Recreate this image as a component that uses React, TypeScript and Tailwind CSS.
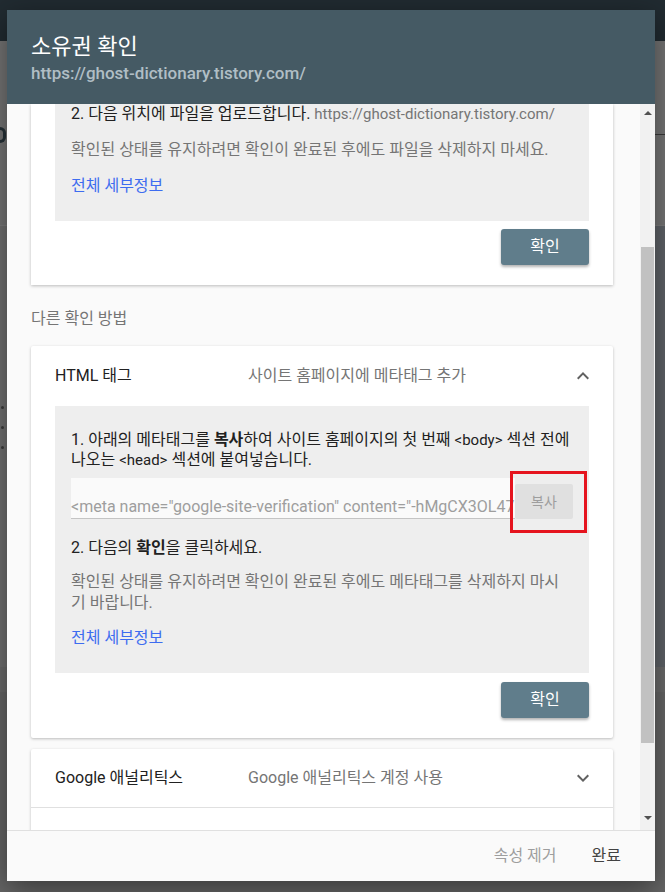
const FONT = "font-['Roboto','Noto_Sans_CJK_KR',sans-serif]";

function ExpandIcon({ up }: { up?: boolean }) {
  return (
    <svg width="24" height="24" viewBox="0 0 24 24" className="text-[#616161]">
      <path
        fill="currentColor"
        d={up ? "M7.41 15.41L12 10.83l4.59 4.58L18 14l-6-6-6 6z" : "M7.41 8.59L12 13.17l4.59-4.58L18 10l-6 6-6-6z"}
      />
    </svg>
  );
}

function ConfirmButton() {
  return (
    <div className="flex justify-end">
      <button className="h-[36px] w-[88px] rounded-[3px] bg-[#607d8b] text-[16px] text-white shadow-[0_2px_3px_rgba(0,0,0,0.3)]">
        확인
      </button>
    </div>
  );
}

// page behind the dimmed overlay
function Backdrop() {
  return (
    <div className="flex h-[892px] w-[665px] flex-col bg-[#727272]">
      <div className="h-[41px] bg-[#212b31]" />
      <div className="flex h-[185px] justify-between border-b border-[#7d7d7d] bg-[#757575]">
        <div className="mt-[86px] h-[16px] w-[6px] rounded-r-full border-[3px] border-l-0 border-[#263238]" />
        <div className="mt-[93px] h-[1px] w-[10px] bg-[#3a3a3a]" />
      </div>
      <div className="flex h-[441px] justify-between bg-[#707070]">
        <div className="flex flex-col gap-[17px] pl-[1px] pt-[180px]">
          <div className="h-[3px] w-[3px] rounded-full bg-[#3c3c3c]" />
          <div className="h-[3px] w-[3px] rounded-full bg-[#3c3c3c]" />
          <div className="h-[3px] w-[3px] rounded-full bg-[#3c3c3c]" />
        </div>
        <div className="w-[10px] bg-[#5f6368]" />
      </div>
      <div className="h-[25px] bg-[#6b6b6b]" />
      <div className="flex-1 bg-[#666666]" />
    </div>
  );
}

export default function App() {
  return (
    <div className={`relative h-[892px] w-[665px] overflow-hidden ${FONT}`}>
      <Backdrop />

      <div className="absolute left-[7px] top-[10px] flex h-[871px] w-[648px] flex-col bg-[#fafafa] shadow-[0_8px_28px_rgba(0,0,0,0.45)]">
        <header className="h-[94px] shrink-0 bg-[#455a64] px-[24px] pt-[24px]">
          <h1 className="text-[22px] leading-[26px] text-white">소유권 확인</h1>
          <p className="mt-[2px] text-[17px] font-medium leading-[22px] text-[#b0bec5]">
            https://ghost-dictionary.tistory.com/
          </p>
        </header>

        <div className="flex min-h-0 flex-1">
          <div className="min-w-0 flex-1 overflow-hidden pl-[24px] pr-[27px]">
            {/* file upload card, scrolled partly out of view */}
            <div className="bg-white px-[24px] pb-[20px] shadow-[0_1px_3px_rgba(0,0,0,0.25)]">
              <div className="bg-[#eeeeee] px-[16px] pb-[25px] text-[16px] leading-[20px]">
                <p className="text-[#212121]">
                  2. 다음 위치에 파일을 업로드합니다.{" "}
                  <span className="text-[15px] text-[#757575]">https://ghost-dictionary.tistory.com/</span>
                </p>
                <p className="mt-[16px] text-[#757575]">확인된 상태를 유지하려면 확인이 완료된 후에도 파일을 삭제하지 마세요.</p>
                <p className="mt-[16px] text-[#3d6cf0]">전체 세부정보</p>
              </div>
              <div className="mt-[8px]">
                <ConfirmButton />
              </div>
            </div>

            <p className="mt-[24px] text-[16px] leading-[20px] text-[#757575]">다른 확인 방법</p>

            {/* HTML tag card */}
            <div className="mt-[17px] rounded-[2px] bg-white px-[24px] pb-[20px] shadow-[0_1px_3px_rgba(0,0,0,0.25)]">
              <div className="flex h-[60px] items-center text-[16px]">
                <span className="w-[193px] text-[#212121]">HTML 태그</span>
                <span className="flex-1 text-[#757575]">사이트 홈페이지에 메타태그 추가</span>
                <span className="mr-[-6px]">
                  <ExpandIcon up />
                </span>
              </div>
              <div className="bg-[#eeeeee] pb-[25px] pl-[16px] pr-[2px] pt-[24px] text-[16px] leading-[20px]">
                <p className="text-[#212121]">
                  1. 아래의 메타태그를 <b className="font-semibold">복사</b>하여 사이트 홈페이지의 첫 번째{" "}
                  <span className="text-[15px]">&lt;body&gt;</span> 섹션 전에
                  <br />
                  나오는 <span className="text-[15px]">&lt;head&gt;</span> 섹션에 붙여넣습니다.
                </p>
                <div className="relative mr-[14px] mt-[8px] flex h-[41px]">
                  <div className="min-w-0 flex-1 overflow-hidden whitespace-nowrap border-b border-[#c4c4c4] bg-[#fafafa] pt-[19px] text-[16px] leading-[20px] text-[#9e9e9e]">
                    &lt;meta name="google-site-verification" content="-hMgCX3OL47kq2nQp" /&gt;
                  </div>
                  <button className="mt-[6px] h-[35px] w-[58px] shrink-0 rounded-[2px] bg-[#e0e0e0] text-[14px] text-[#9e9e9e]">
                    복사
                  </button>
                  <div className="absolute left-[439px] top-[-7px] h-[62px] w-[77px] border-[3px] border-[#e5141e]" />
                </div>
                <p className="mt-[19px] text-[#212121]">
                  2. 다음의 <b className="font-semibold">확인</b>을 클릭하세요.
                </p>
                <p className="mt-[13px] leading-[21px] text-[#757575]">
                  확인된 상태를 유지하려면 확인이 완료된 후에도 메타태그를 삭제하지 마시
                  <br />
                  기 바랍니다.
                </p>
                <p className="mt-[15px] text-[#3d6cf0]">전체 세부정보</p>
              </div>
              <div className="mt-[9px]">
                <ConfirmButton />
              </div>
            </div>

            {/* collapsed methods */}
            <div className="mt-[11px] rounded-[2px] bg-white shadow-[0_1px_3px_rgba(0,0,0,0.25)]">
              <div className="flex h-[59px] items-center border-b border-[#e0e0e0] px-[24px] text-[16px]">
                <span className="w-[193px] text-[#212121]">Google 애널리틱스</span>
                <span className="flex-1 text-[#757575]">Google 애널리틱스 계정 사용</span>
                <span className="mr-[-6px]">
                  <ExpandIcon />
                </span>
              </div>
              <div className="h-[59px]" />
            </div>
          </div>

          {/* scrollbar */}
          <div className="flex w-[15px] shrink-0 flex-col items-center bg-[#f1f1f1]">
            <div className="mt-[7px] h-0 w-0 border-x-[4px] border-b-[4px] border-x-transparent border-b-[#505050]" />
            <div className="mt-[132px] h-[496px] w-[13px] bg-[#c1c1c1]" />
            <div className="mt-[73px] h-0 w-0 border-x-[4px] border-t-[4px] border-x-transparent border-t-[#505050]" />
          </div>
        </div>

        <footer className="flex h-[51px] shrink-0 items-center justify-end gap-[35px] border-t border-[#e0e0e0] bg-[#fafafa] pr-[34px] text-[16px]">
          <span className="text-[#9e9e9e]">속성 제거</span>
          <span className="text-[#424242]">완료</span>
        </footer>
      </div>
    </div>
  );
}
